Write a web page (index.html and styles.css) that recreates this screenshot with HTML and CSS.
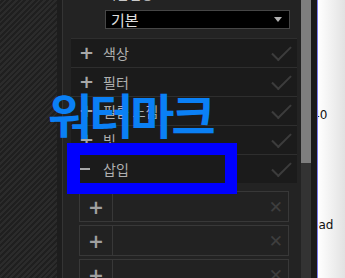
FILE: index.html
```html
<!DOCTYPE html>
<html lang="ko">
<head>
  <meta charset="UTF-8">
  <title>편집</title>
  <link rel="stylesheet" href="styles.css">
</head>
<body>
  <div class="app">
    <div class="stripes"></div>
    <div class="gutter"></div>
    <div class="panel">
      <div class="setting">
        <div class="setting-label">다음설정:</div>
        <div class="select">
          <span>기본</span>
          <span class="select-arrow"></span>
        </div>
      </div>

      <div class="sections">
        <div class="section"><span class="toggle">+</span><span class="section-name">색상</span><span class="check"></span></div>
        <div class="section"><span class="toggle">+</span><span class="section-name">필터</span><span class="check"></span></div>
        <div class="section"><span class="toggle">+</span><span class="section-name">필름 느낌</span><span class="check"></span></div>
        <div class="section"><span class="toggle">+</span><span class="section-name">빛</span><span class="check"></span></div>
        <div class="section"><span class="toggle minus"></span><span class="section-name">삽입</span><span class="check"></span></div>
      </div>

      <div class="slots">
        <div class="slot"><span class="slot-add">+</span><span class="slot-body"><span class="slot-x">✕</span></span></div>
        <div class="slot"><span class="slot-add">+</span><span class="slot-body"><span class="slot-x">✕</span></span></div>
        <div class="slot"><span class="slot-add">+</span><span class="slot-body"><span class="slot-x">✕</span></span></div>
      </div>
    </div>
    <div class="scrollbar"><div class="thumb"></div></div>
    <div class="edge"></div>
    <div class="viewer">
      <div class="viewer-text t1">40</div>
      <div class="viewer-text t2">ead</div>
    </div>
  </div>

  <div class="watermark">워터마크</div>
  <div class="highlight"></div>
</body>
</html>
```

FILE: styles.css
```css
body {
  margin: 0;
  width: 345px;
  height: 278px;
  overflow: hidden;
  background: #222;
  font-family: "Noto Sans CJK KR", "Noto Sans", sans-serif;
  position: relative;
}
.app {
  display: flex;
  height: 278px;
}
.stripes {
  width: 57px;
  flex: none;
  background: repeating-linear-gradient(-45deg, #2b2b2b 0, #2b2b2b 2px, #1f1f1f 2px, #1f1f1f 4px);
}
.gutter {
  width: 5px;
  flex: none;
  background: #1d1d1d;
  border-right: 1px solid #343434;
}
.panel {
  width: 238px;
  flex: none;
  background: #232323;
  overflow: hidden;
}
.setting {
  margin-top: -15px;
  padding-left: 42px;
}
.setting-label {
  font-size: 13px;
  line-height: 17px;
  color: #c8c8c8;
}
.select {
  height: 17px;
  width: 171px;
  margin-top: 8px;
  background: #000;
  border: 1px solid #464646;
  display: flex;
  align-items: center;
  justify-content: space-between;
  padding: 0 7px 0 5px;
  color: #e0e0e0;
  font-size: 15px;
}
.select-arrow {
  width: 0;
  height: 0;
  border-left: 4px solid transparent;
  border-right: 4px solid transparent;
  border-top: 5px solid #b0b0b0;
}
.sections {
  margin: 9px 4px 0 8px;
}
.section {
  height: 28px;
  border-top: 1px solid #2e2e2e;
  background: #1b1b1b;
  display: flex;
  align-items: center;
  padding: 0 4px 0 8px;
}
.toggle {
  width: 12px;
  font-size: 18px;
  font-weight: bold;
  line-height: 20px;
  color: #a8a8a8;
  text-align: center;
  font-family: "DejaVu Sans", sans-serif;
}
.toggle.minus {
  height: 2px;
  width: 10px;
  margin: 0 1px;
  background: #a8a8a8;
}
.section-name {
  margin-left: 12px;
  flex: 1;
  font-size: 14px;
  color: #b0b0b0;
}
.check {
  width: 17px;
  height: 8px;
  border-left: 2px solid #3c3c3c;
  border-bottom: 2px solid #3c3c3c;
  transform: rotate(-45deg);
  margin-right: 2px;
  margin-top: -5px;
}
.slots {
  margin: 8px 0 0 16px;
  width: 210px;
  display: flex;
  flex-direction: column;
  gap: 3px;
}
.slot {
  height: 29px;
  border: 1px solid #383838;
  display: flex;
  background: #222;
}
.slot-add {
  width: 32px;
  border-right: 1px solid #383838;
  display: flex;
  align-items: center;
  justify-content: center;
  font-family: "DejaVu Sans", sans-serif;
  font-size: 19px;
  font-weight: bold;
  color: #a0a0a0;
}
.slot-body {
  flex: 1;
  display: flex;
  align-items: center;
  justify-content: flex-end;
  padding-right: 5px;
}
.slot-x {
  font-family: "DejaVu Sans", sans-serif;
  font-size: 17px;
  color: #3e3e3e;
  font-weight: bold;
}
.scrollbar {
  width: 10px;
  flex: none;
  background: #333;
}
.thumb {
  height: 163px;
  background: #7e7e7e;
}
.edge {
  width: 6px;
  flex: none;
  background: #1a1a1a;
  border-right: 1px solid #7d7df0;
}
.viewer {
  flex: 1;
  position: relative;
  overflow: hidden;
  background: linear-gradient(to right, #ffffff, #e2e2e2);
}
.viewer-text {
  position: absolute;
  font-family: "DejaVu Sans", sans-serif;
  font-size: 12px;
  color: #111;
}
.t1 {
  top: 108px;
  left: -6px;
}
.t2 {
  top: 218px;
  left: -7px;
}
.watermark {
  position: absolute;
  left: 48px;
  top: 83px;
  font-size: 48px;
  font-weight: bold;
  line-height: 60px;
  color: #0a80f5;
  letter-spacing: -3px;
}
.highlight {
  position: absolute;
  left: 67px;
  top: 143px;
  width: 145px;
  height: 28px;
  border: 12px solid #0000ff;
  border-left-width: 13px;
  border-bottom-width: 11px;
}
```
